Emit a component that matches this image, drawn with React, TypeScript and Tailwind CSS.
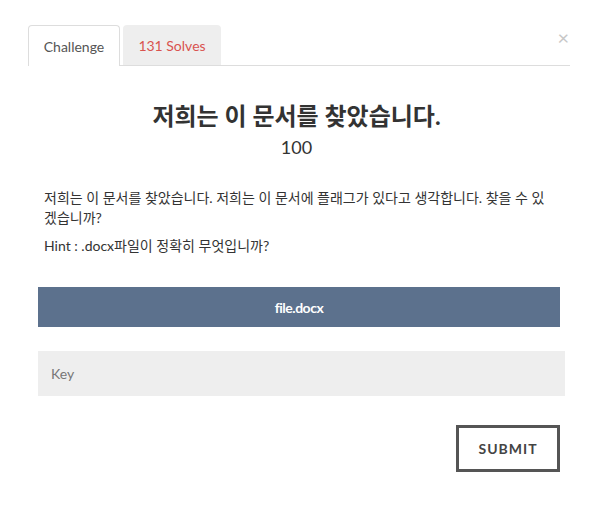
export default function App() {
  const font = { fontFamily: '"Lato", "Noto Sans CJK KR", sans-serif' };
  return (
    <div className="w-[593px] h-[510px] bg-white text-[#333]" style={font}>
      <div className="pt-[25px] flex items-end relative border-b border-[#ddd] w-[542px] ml-[28px]">
        <div className="w-[92px] h-[41px] bg-white border border-[#ddd] border-b-0 rounded-t-[4px] flex items-center justify-center text-[14px] text-[#555] -mb-px">
          Challenge
        </div>
        <div className="w-[98px] h-[40px] ml-[3px] bg-[#eee] rounded-t-[4px] flex items-center justify-center text-[14px] text-[#d9534f]">
          131 Solves
        </div>
        <span className="absolute right-[1px] top-[27px] text-[#c7c7c7] text-[20px] leading-none">×</span>
      </div>

      <div className="flex flex-col items-center mt-[35px]">
        <h3 className="text-[24px] font-bold leading-[30px] text-[#333]">저희는 이 문서를 찾았습니다.</h3>
        <p className="text-[18px] leading-[24px] mt-[4px]">100</p>
      </div>

      <div className="pl-[44px] pr-[44px] mt-[29px] text-[14px] leading-[20px]">
        <p>저희는 이 문서를 찾았습니다. 저희는 이 문서에 플래그가 있다고 생각합니다. 찾을 수 있겠습니까?</p>
        <p className="mt-[8px]">Hint : .docx파일이 정확히 무엇입니까?</p>
      </div>

      <div className="ml-[38px] mt-[31px] w-[522px] h-[40px] bg-[#5c718d] flex items-center justify-center text-white font-bold text-[14px] tracking-[-0.5px]">
        file.docx
      </div>

      <div className="ml-[38px] mt-[24px] w-[527px] h-[45px] bg-[#eee] flex items-center pl-[13px] text-[14px] text-[#777]">
        Key
      </div>

      <div className="flex justify-end mt-[29px] pr-[33px]">
        <button className="w-[104px] h-[47px] border-[3px] border-[#555] bg-white text-[14px] font-bold tracking-[1px] text-[#444]">
          SUBMIT
        </button>
      </div>
    </div>
  );
}
